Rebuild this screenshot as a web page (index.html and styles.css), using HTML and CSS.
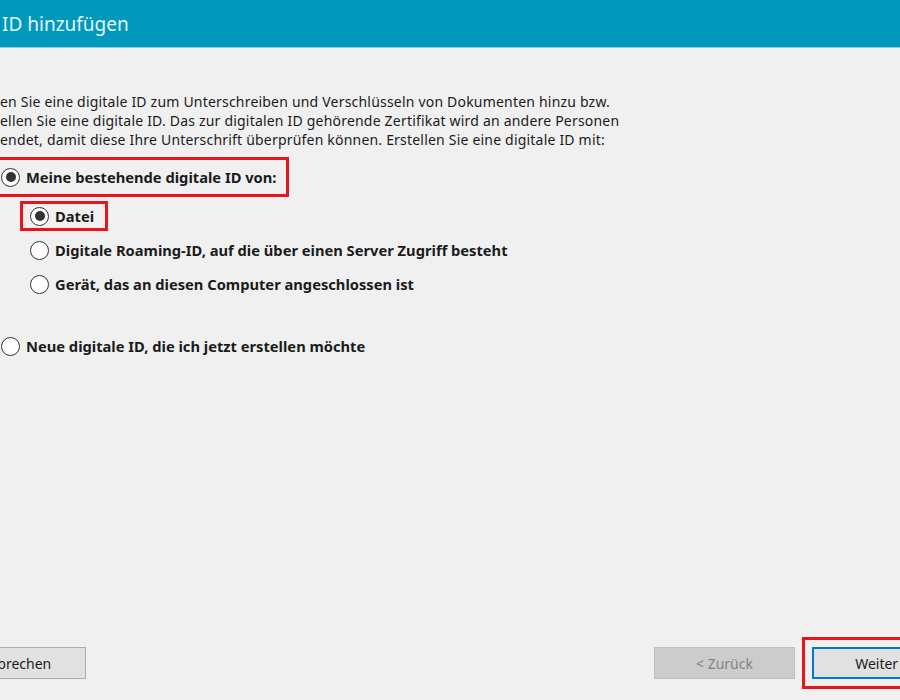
FILE: index.html
```html
<!DOCTYPE html>
<html lang="de">
<head>
  <meta charset="UTF-8">
  <meta name="viewport" content="width=device-width, initial-scale=1.0">
  <title>Digitale ID hinzufügen</title>
  <link rel="stylesheet" href="styles.css">
</head>
<body>
  <header class="titlebar">
    <h1>ID hinzufügen</h1>
  </header>

  <div class="page">
    <div class="main">
      <p class="intro">
        en Sie eine digitale ID zum Unterschreiben und Verschlüsseln von Dokumenten hinzu bzw.<br>
        ellen Sie eine digitale ID. Das zur digitalen ID gehörende Zertifikat wird an andere Personen<br>
        endet, damit diese Ihre Unterschrift überprüfen können. Erstellen Sie eine digitale ID mit:
      </p>

      <label class="option top marked">
        <span class="radio checked"></span>
        Meine bestehende digitale ID von:
      </label>

      <div class="suboptions">
        <label class="option marked">
          <span class="radio checked"></span>
          Datei
        </label>
        <label class="option">
          <span class="radio"></span>
          Digitale Roaming-ID, auf die über einen Server Zugriff besteht
        </label>
        <label class="option">
          <span class="radio"></span>
          Gerät, das an diesen Computer angeschlossen ist
        </label>
      </div>

      <label class="option top new">
        <span class="radio"></span>
        Neue digitale ID, die ich jetzt erstellen möchte
      </label>
    </div>

    <div class="buttons">
      <button class="btn cancel">Abbrechen</button>
      <div class="nav">
        <button class="btn" disabled>&lt; Zurück</button>
        <button class="btn primary marked">Weiter &gt;</button>
      </div>
    </div>
  </div>
</body>
</html>
```

FILE: styles.css
```css
body {
  font-family: "Noto Sans", "Open Sans", sans-serif;
  margin: 0;
  padding: 0;
  background: #f0f0f0;
  color: #1b1b1b;
  height: 100vh;
  overflow: hidden;
  display: flex;
  flex-direction: column;
}
.titlebar {
  background: #0099bc;
  height: 47px;
  border-bottom: 1px solid #8cccdc;
  display: flex;
  align-items: center;
  padding-left: 2px;
}
.titlebar h1 {
  margin: 0;
  font-size: 19px;
  font-weight: normal;
  color: #e4f3f8;
}
.page {
  flex: 1;
  display: flex;
  flex-direction: column;
}
.main {
  flex: 1;
  padding-top: 44px;
}
.intro {
  margin: 0;
  font-size: 14px;
  letter-spacing: 0.2px;
  line-height: 19px;
}
.option {
  display: flex;
  align-items: center;
  gap: 6px;
  font-size: 14.7px;
  font-weight: bold;
  height: 24px;
  width: max-content;
}
.option.top {
  margin-left: 1px;
  margin-top: 16px;
}
.suboptions {
  margin-left: 30px;
  margin-top: 15px;
  display: flex;
  flex-direction: column;
  gap: 10px;
}
.option.new {
  margin-top: 38px;
}
.radio {
  width: 17px;
  height: 17px;
  border: 1px solid #333;
  border-radius: 50%;
  background: #fff;
  display: flex;
  align-items: center;
  justify-content: center;
}
.radio.checked::after {
  content: "";
  width: 10px;
  height: 10px;
  border-radius: 50%;
  background: #333;
}

/* red highlight frames */
.marked {
  outline: 3px solid #e5141d;
}
.option.top.marked {
  outline-offset: 5px;
  padding-right: 5px;
}
.suboptions .option.marked {
  outline-offset: 0;
  margin-left: -7px;
  padding: 0 11px 0 7px;
}

.buttons {
  display: flex;
  justify-content: space-between;
  padding-bottom: 21px;
}
.btn {
  font-family: inherit;
  font-size: 14px;
  color: #1b1b1b;
  width: 141px;
  height: 32px;
  background: #e1e1e1;
  border: 1px solid #adadad;
  padding: 0;
}
.btn.cancel {
  margin-left: -55px;
}
.btn:disabled {
  background: #cccccc;
  border-color: #bfbfbf;
  color: #838383;
}
.nav {
  display: flex;
  gap: 17px;
  margin-right: -53px;
}
.btn.primary {
  border: 2px solid #0078d7;
  outline-offset: 7px;
}
```
